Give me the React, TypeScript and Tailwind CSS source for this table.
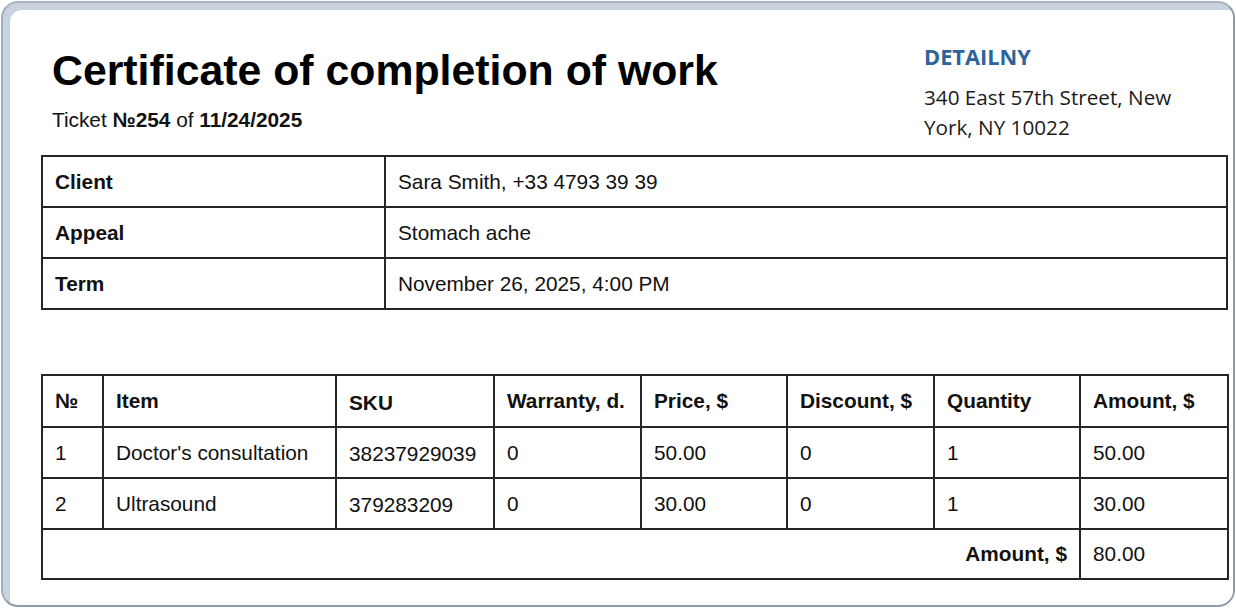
import type { ReactNode } from "react";

const sans = "font-['Liberation_Sans',Arial,sans-serif]";

const info = [
  { label: "Client", value: "Sara Smith, +33 4793 39 39" },
  { label: "Appeal", value: "Stomach ache" },
  { label: "Term", value: "November 26, 2025, 4:00 PM" },
];

const columns = [
  { title: "№", w: "w-[61px]" },
  { title: "Item", w: "w-[233px]" },
  { title: "SKU", w: "w-[158px]" },
  { title: "Warranty, d.", w: "w-[147px]" },
  { title: "Price, $", w: "w-[146px]" },
  { title: "Discount, $", w: "w-[147px]" },
  { title: "Quantity", w: "w-[146px]" },
  { title: "Amount, $", w: "w-[148px]" },
];

const items = [
  { n: "1", item: "Doctor's consultation", sku: "38237929039", warranty: "0", price: "50.00", discount: "0", qty: "1", amount: "50.00" },
  { n: "2", item: "Ultrasound", sku: "379283209", warranty: "0", price: "30.00", discount: "0", qty: "1", amount: "30.00" },
];

function Cell({ children, bold, className = "" }: { children: ReactNode; bold?: boolean; className?: string }) {
  return (
    <td className={`border-2 border-[#262626] px-[12px] text-left align-middle ${bold ? "font-bold" : ""} ${className}`}>
      {children}
    </td>
  );
}

export default function App() {
  return (
    <div className="h-[608px] w-[1236px] bg-white p-px">
      <div className="h-full overflow-hidden rounded-[17px] border-2 border-[#8f9aab] border-t-[#aab5c3] border-l-[#a3aebd] bg-[#c9d3df] pl-[7px] pt-[7px]">
        <div className={`h-full rounded-tl-[12px] bg-white pl-[31px] pt-[39px] text-[#111] ${sans}`}>
          <header className="flex items-start">
            <div className="ml-[11px] w-[872px]">
              <h1 className="text-[42.8px] font-bold leading-none text-black">Certificate of completion of work</h1>
              <p className="mt-[18px] text-[20.8px] leading-none">
                Ticket <b>№254</b> of <b>11/24/2025</b>
              </p>
            </div>
            <div className="-mt-[5px] font-['Open_Sans',sans-serif]">
              <div className="text-[21.8px] font-bold leading-[26px] text-[#2b639b]">DETAILNY</div>
              <p className="mt-[12px] text-[20.7px] leading-[30px] text-[#1b1b1b]">
                340 East 57th Street, New
                <br />
                York, NY 10022
              </p>
            </div>
          </header>

          <table className="mt-[13px] w-[1187px] table-fixed border-collapse text-[20.8px]">
            <colgroup>
              <col className="w-[343px]" />
              <col />
            </colgroup>
            <tbody>
              {info.map((r) => (
                <tr key={r.label} className="h-[51px]">
                  <Cell bold>{r.label}</Cell>
                  <Cell>{r.value}</Cell>
                </tr>
              ))}
            </tbody>
          </table>

          <table className="mt-[64px] w-[1187px] table-fixed border-collapse text-[20.8px]">
            <colgroup>
              {columns.map((c) => (
                <col key={c.title} className={c.w} />
              ))}
            </colgroup>
            <thead>
              <tr className="h-[52px]">
                {columns.map((c) => (
                  <th
                    key={c.title}
                    className={`border-2 border-[#262626] px-[12px] text-left align-middle font-bold ${c.title === "SKU" ? "pt-[3px]" : ""}`}
                  >
                    {c.title}
                  </th>
                ))}
              </tr>
            </thead>
            <tbody>
              {items.map((r) => (
                <tr key={r.n} className="h-[51px]">
                  <Cell>{r.n}</Cell>
                  <Cell>{r.item}</Cell>
                  <Cell className="pt-[3px]">{r.sku}</Cell>
                  <Cell>{r.warranty}</Cell>
                  <Cell>{r.price}</Cell>
                  <Cell>{r.discount}</Cell>
                  <Cell>{r.qty}</Cell>
                  <Cell>{r.amount}</Cell>
                </tr>
              ))}
              <tr className="h-[50px]">
                <td colSpan={7} className="border-2 border-[#262626] px-[12px] text-right align-middle font-bold">
                  Amount, $
                </td>
                <Cell>80.00</Cell>
              </tr>
            </tbody>
          </table>
        </div>
      </div>
    </div>
  );
}
